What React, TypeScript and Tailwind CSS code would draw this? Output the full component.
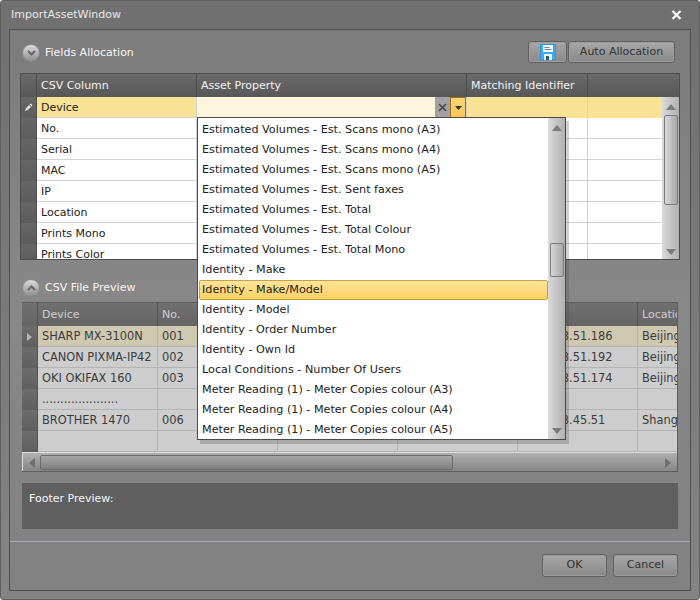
import React from "react";

const headerCell = "flex items-center pl-[4px] pt-[1px] border-r border-[#4d4d4d] text-[#f2f2f2] whitespace-nowrap overflow-hidden";
const list = [
  "Estimated Volumes - Est. Scans mono (A3)",
  "Estimated Volumes - Est. Scans mono (A4)",
  "Estimated Volumes - Est. Scans mono (A5)",
  "Estimated Volumes - Est. Sent faxes",
  "Estimated Volumes - Est. Total",
  "Estimated Volumes - Est. Total Colour",
  "Estimated Volumes - Est. Total Mono",
  "Identity - Make",
  "Identity - Make/Model",
  "Identity - Model",
  "Identity - Order Number",
  "Identity - Own Id",
  "Local Conditions - Number Of Users",
  "Meter Reading (1) - Meter Copies colour (A3)",
  "Meter Reading (1) - Meter Copies colour (A4)",
  "Meter Reading (1) - Meter Copies colour (A5)",
];
const top = ["No.", "Serial", "MAC", "IP", "Location", "Prints Mono", "Prints Color"];
const preview = [
  ["SHARP MX-3100N", "001", "", "", "192.168.51.186", "Beijing"],
  ["CANON PIXMA-IP42", "002", "", "", "192.168.51.192", "Beijing"],
  ["OKI OKIFAX 160", "003", "", "", "192.168.51.174", "Beijing"],
  [".....................", "", "", "", "", ""],
  ["BROTHER 1470", "006", "", "", "192.168.45.51", "Shanghai"],
  ["", "", "", "", "", ""],
];

function Toggle({ up }: { up?: boolean }) {
  return (
    <div className="w-[18px] h-[18px] rounded-full border border-[#8a8a8a] bg-gradient-to-b from-[#dcdcdc] to-[#8f8f8f] flex items-center justify-center">
      <svg width="9" height="6" viewBox="0 0 9 6" className={up ? "rotate-180" : ""}>
        <path d="M1 1l3.5 3.5L8 1" fill="none" stroke="#666" strokeWidth="2" />
      </svg>
    </div>
  );
}

function Tri({ dir, color = "#7a7a7a" }: { dir: "up" | "down" | "left" | "right"; color?: string }) {
  const d = { up: "M0 6L5 0L10 6Z", down: "M0 0L5 6L10 0Z", left: "M6 0L0 5L6 10Z", right: "M0 0L6 5L0 10Z" }[dir];
  const box = dir === "up" || dir === "down" ? { w: 10, h: 6, v: "0 0 10 6" } : { w: 6, h: 10, v: "0 0 6 10" };
  return (
    <svg width={box.w} height={box.h} viewBox={box.v}>
      <path d={d} fill={color} />
    </svg>
  );
}

function Btn({ children, className }: { children: React.ReactNode; className: string }) {
  return (
    <div className={`flex items-center justify-center rounded-[3px] border border-[#626262] bg-gradient-to-b from-[#a8a8a8] to-[#888888] text-[#333] shadow-[inset_0_0_0_1px_#9c9c9c] ${className}`}>
      {children}
    </div>
  );
}

export default function App() {
  return (
    <div className="w-[700px] h-[600px] overflow-hidden font-['DejaVu_Sans',sans-serif] text-[11px] flex flex-col border border-[#5f5f5f] rounded-[3px] bg-gradient-to-b from-[#707070] to-[#848484]">
      <div className="h-[28px] shrink-0 flex items-center justify-between pl-[10px] pr-[17px] text-[#e8e8e8]">
        <span>ImportAssetWindow</span>
        <svg width="11" height="10" viewBox="0 0 11 10">
          <path d="M1.5 1l8 8M9.5 1l-8 8" stroke="#f4f4f4" strokeWidth="2.4" />
        </svg>
      </div>
      <div className="relative mx-[8px] mb-[8px] flex-1 border border-[#4f4f4f] bg-gradient-to-b from-[#7c7c7c] via-[#888888] to-[#818181] flex flex-col">
        {/* Section 1 header */}
        <div className="h-[43px] shrink-0 flex items-center justify-between pl-[12px] pr-[15px] pt-[1px]">
          <div className="flex items-center gap-[5px] text-[#f6f6f6] mt-[2px]">
            <Toggle />
            <span>Fields Allocation</span>
          </div>
          <div className="flex gap-[1px]">
            <Btn className="w-[39px] h-[22px]">
              <svg width="16" height="16" viewBox="0 0 16 16">
                <rect width="16" height="16" fill="#2a96e0" />
                <rect x="1" y="1" width="14" height="14" fill="#3fa9ee" />
                <rect x="3" y="1" width="10" height="7" fill="#f2f6fa" />
                <path d="M4.5 3.5h5M4.5 5.5h7" stroke="#77858f" />
                <rect x="4" y="10" width="8" height="6" fill="#eef3f7" />
                <rect x="6" y="12" width="3" height="4" fill="#1b5f96" />
              </svg>
            </Btn>
            <Btn className="w-[107px] h-[22px]">Auto Allocation</Btn>
          </div>
        </div>

        {/* Table 1 */}
        <div className="mx-[10px] h-[187px] shrink-0 border border-[#4d4d4d] flex flex-col overflow-hidden bg-white">
          <div className="h-[23px] shrink-0 flex bg-gradient-to-b from-[#6b6b6b] to-[#575757]">
            <div className="w-[16px] border-r border-[#4d4d4d] shrink-0" />
            <div className={`${headerCell} w-[160px]`}>CSV Column</div>
            <div className={`${headerCell} w-[270px]`}>Asset Property</div>
            <div className={`${headerCell} w-[121px]`}>Matching Identifier</div>
            <div className="flex-1" />
          </div>
          <div className="flex flex-1 min-h-0">
            <div className="flex-1 min-w-0 overflow-hidden">
              <div className="h-[21px] flex bg-[#f8e394] text-[#222]">
                <div className="w-[16px] shrink-0 bg-gradient-to-b from-[#666666] to-[#5c5c5c] border-r border-[#4d4d4d] flex items-center justify-center">
                  <svg width="9" height="9" viewBox="0 0 9 9"><path d="M1 8l1-3 3-3 2 2-3 3z" fill="#dcdcdc" /><path d="M5.6 1.4L7 .6 8.4 2 7.6 3.4z" fill="#fff" /></svg>
                </div>
                <div className="w-[160px] pl-[4px] pt-[2px] flex items-center border-r border-b border-[#d3d3d3]">Device</div>
                <div className="w-[270px] flex items-center justify-end bg-[#fdf5dc] border-r border-[#d3d3d3]">
                  <div className="w-[15px] h-full bg-[#a2a2a2] flex items-center justify-center">
                    <svg width="9" height="9" viewBox="0 0 9 9"><path d="M1 1l7 7M8 1l-7 7" stroke="#4a4a4a" strokeWidth="1.7" /></svg>
                  </div>
                  <div className="w-[16px] h-full bg-gradient-to-b from-[#fbd679] to-[#fbc755] border border-[#a66a1c] flex items-center justify-center">
                    <svg width="7" height="4" viewBox="0 0 7 4"><path d="M0 0h7L3.5 4z" fill="#333" /></svg>
                  </div>
                </div>
                <div className="w-[121px] border-r border-[#d3d3d3]" />
              </div>
              {top.map((t) => (
                <div key={t} className="h-[21px] flex bg-white text-[#222]">
                  <div className="w-[16px] shrink-0 bg-gradient-to-b from-[#666666] to-[#5c5c5c] border-r border-[#4d4d4d]" />
                  <div className="flex-1 flex border-b border-[#d3d3d3]">
                    <div className="w-[160px] pl-[4px] pt-[2px] flex items-center border-r border-[#d3d3d3]">{t}</div>
                    <div className="w-[270px] border-r border-[#d3d3d3]" />
                    <div className="w-[121px] border-r border-[#d3d3d3]" />
                  </div>
                </div>
              ))}
            </div>
            <div className="w-[17px] shrink-0 bg-gradient-to-r from-[#dadada] to-[#b0b0b0] flex flex-col items-center justify-between pb-[4px] pt-[7px]">
              <Tri dir="up" />
              <div className="w-[14px] h-[90px] rounded-[2px] border border-[#7a7a7a] bg-gradient-to-r from-[#d8d8d8] to-[#a8a8a8] mt-[5px] mb-auto" />
              <Tri dir="down" />
            </div>
          </div>
        </div>

        {/* Section 2 header */}
        <div className="h-[42px] shrink-0 flex items-center pl-[12px] pt-[14px] gap-[5px] text-[#f6f6f6]">
          <Toggle up />
          <span>CSV File Preview</span>
        </div>

        {/* Table 2 */}
        <div className="mx-[12px] h-[170px] shrink-0 border-r border-b border-[#5f5f5f] flex flex-col overflow-hidden bg-[#cdcdcd] text-[11.4px]">
          <div className="h-[24px] shrink-0 flex bg-gradient-to-b from-[#707070] to-[#656565] text-[#cfcfcf] border-t border-[#5c5c5c]">
            <div className="w-[16px] shrink-0 border-r border-[#555]" />
            {["Device", "No.", "Serial", "MAC", "IP", "Location"].map((h) => (
              <div key={h} className="w-[120px] shrink-0 pl-[4px] pt-[1px] flex items-center border-r border-[#555] text-[11px]">{h}</div>
            ))}
          </div>
          {preview.map((r, i) => (
            <div key={i} className={`h-[21px] shrink-0 flex text-[#3a3a3a] ${i === 0 ? "bg-[#cfc8b0]" : "bg-[#cdcdcd]"}`}>
              <div className="w-[16px] shrink-0 bg-gradient-to-b from-[#6d6d6d] to-[#5f5f5f] border-r border-[#555] flex items-center justify-center">
                {i === 0 && (
                  <svg width="5" height="8" viewBox="0 0 5 8"><path d="M0 0L5 4L0 8Z" fill="#b4b4b4" /></svg>
                )}
              </div>
              <div className="flex flex-1 border-b border-[#b4b4b4]">
                {r.map((c, j) => (
                  <div key={j} className="w-[120px] shrink-0 pl-[4px] pt-[1px] flex items-center border-r border-[#b4b4b4] whitespace-nowrap overflow-hidden">{c}</div>
                ))}
              </div>
            </div>
          ))}
          <div className="h-[19px] shrink-0 flex items-end bg-gradient-to-b from-[#b0b0b0] to-[#868686] pl-[6px] pr-[6px] gap-[5px] border-t border-l border-[#dcdcdc] pb-[1px]">
            <div className="mb-[2px]"><Tri dir="left" color="#6f6f6f" /></div>
            <div className="w-[413px] h-[15px] rounded-[2px] border border-[#6a6a6a] bg-gradient-to-b from-[#a6a6a6] to-[#828282]" />
            <div className="ml-auto mb-[2px]"><Tri dir="right" color="#6f6f6f" /></div>
          </div>
        </div>

        {/* Footer preview */}
        <div className="mx-[12px] mt-[11px] h-[46px] shrink-0 bg-[#5f5f5f] pl-[7px] pt-[8px] text-[#f8f8f8]">Footer Preview:</div>

        <div className="mt-[12px] h-px shrink-0 bg-[#aaaab4]" />

        <div className="flex justify-end gap-[6px] pr-[12px] pt-[12px]">
          <Btn className="w-[65px] h-[23px]">OK</Btn>
          <Btn className="w-[65px] h-[23px]">Cancel</Btn>
        </div>

        {/* Dropdown popup */}
        <div className="absolute left-[187px] top-[87px] w-[369px] h-[323px] border border-[#4a4a4a] bg-white shadow-[3px_4px_0_rgba(70,70,70,0.25)] flex text-[11.2px]">
          <div className="flex-1 min-w-0 pl-[1px] pt-[2px] text-[#222]">
            {list.map((t, i) => (
              <div key={t} className={`h-[20px] flex items-center whitespace-nowrap ${i === 8 ? "bg-gradient-to-b from-[#fde598] to-[#fdd063] border border-[#c9a14a] rounded-[2px] pl-[2px]" : "pl-[3px]"}`}>{t}</div>
            ))}
          </div>
          <div className="w-[17px] shrink-0 bg-gradient-to-r from-[#dadada] to-[#b0b0b0] flex flex-col items-center pt-[7px] pb-[5px]">
            <Tri dir="up" />
            <div className="w-[14px] h-[34px] rounded-[2px] border border-[#7a7a7a] bg-gradient-to-r from-[#d8d8d8] to-[#a8a8a8] mt-[112px]" />
            <div className="mt-auto"><Tri dir="down" /></div>
          </div>
        </div>
      </div>
    </div>
  );
}
